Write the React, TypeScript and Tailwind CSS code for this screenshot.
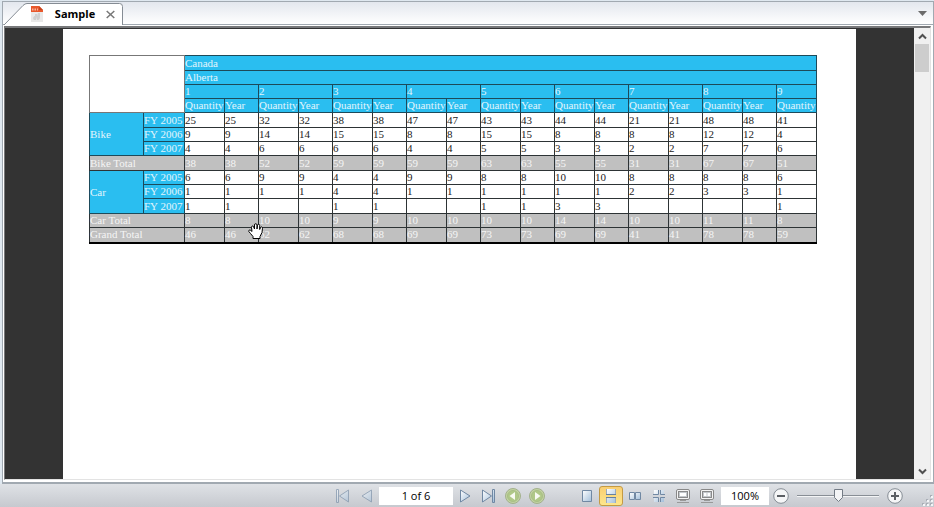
import React from "react";

type Kind = "data" | "total";
type Row = { group?: string; span?: number; label: string; kind: Kind; height: string; values: string[] };

const rows: Row[] = [
  { group: "Bike", span: 3, label: "FY 2005", kind: "data", height: "h-[15px]", values: ["25", "25", "32", "32", "38", "38", "47", "47", "43", "43", "44", "44", "21", "21", "48", "48", "41"] },
  { label: "FY 2006", kind: "data", height: "h-[14px]", values: ["9", "9", "14", "14", "15", "15", "8", "8", "15", "15", "8", "8", "8", "8", "12", "12", "4"] },
  { label: "FY 2007", kind: "data", height: "h-[14px]", values: ["4", "4", "6", "6", "6", "6", "4", "4", "5", "5", "3", "3", "2", "2", "7", "7", "6"] },
  { label: "Bike Total", kind: "total", height: "h-[15px]", values: ["38", "38", "52", "52", "59", "59", "59", "59", "63", "63", "55", "55", "31", "31", "67", "67", "51"] },
  { group: "Car", span: 3, label: "FY 2005", kind: "data", height: "h-[14px]", values: ["6", "6", "9", "9", "4", "4", "9", "9", "8", "8", "10", "10", "8", "8", "8", "8", "6"] },
  { label: "FY 2006", kind: "data", height: "h-[14px]", values: ["1", "1", "1", "1", "4", "4", "1", "1", "1", "1", "1", "1", "2", "2", "3", "3", "1"] },
  { label: "FY 2007", kind: "data", height: "h-[15px]", values: ["1", "1", "", "", "1", "1", "", "", "1", "1", "3", "3", "", "", "", "", "1"] },
  { label: "Car Total", kind: "total", height: "h-[14px]", values: ["8", "8", "10", "10", "9", "9", "10", "10", "10", "10", "14", "14", "10", "10", "11", "11", "8"] },
  { label: "Grand Total", kind: "total", height: "h-[15px]", values: ["46", "46", "62", "62", "68", "68", "69", "69", "73", "73", "69", "69", "41", "41", "78", "78", "59"] },
];

const months = ["1", "2", "3", "4", "5", "6", "7", "8", "9"];
const cell = "border border-[#2d3335] p-0 text-left align-middle font-normal whitespace-nowrap";
const head = "border border-[#1d4a5a] bg-[#2abef0] text-[#e2f5fc] p-0 text-left align-middle font-normal whitespace-nowrap";

function Report() {
  return (
    <table className="w-[728px] table-fixed border-collapse font-['Liberation_Serif',serif] text-[11px] leading-[13px] text-[#222]">
      <colgroup>
        <col className="w-[54px]" />
        <col className="w-[41px]" />
        {months.map((m) => (
          <React.Fragment key={m}>
            <col className="w-[40px]" />
            {m !== "9" && <col className="w-[34px]" />}
          </React.Fragment>
        ))}
      </colgroup>
      <thead>
        <tr className="h-[15px]">
          <td rowSpan={4} colSpan={2} className="border border-[#777] bg-white" />
          <th colSpan={17} className={head}>Canada</th>
        </tr>
        <tr className="h-[14px]">
          <th colSpan={17} className={head}>Alberta</th>
        </tr>
        <tr className="h-[14px]">
          {months.map((m) => (
            <th key={m} colSpan={m === "9" ? 1 : 2} className={head}>{m}</th>
          ))}
        </tr>
        <tr className="h-[14px]">
          {months.map((m) => (
            <React.Fragment key={m}>
              <th className={head}>Quantity</th>
              {m !== "9" && <th className={head}>Year</th>}
            </React.Fragment>
          ))}
        </tr>
      </thead>
      <tbody className="border-b-2 border-black">
        {rows.map((r, i) => (
          <tr key={i} className={r.height}>
            {r.group && <th rowSpan={r.span} className={head}>{r.group}</th>}
            {r.kind === "data" ? (
              <th className={head}>{r.label}</th>
            ) : (
              <th colSpan={2} className={`${cell} bg-[#c0c0c0] text-[#f5f5f5]`}>{r.label}</th>
            )}
            {r.values.map((v, j) => (
              <td key={j} className={r.kind === "total" ? `${cell} bg-[#c0c0c0] text-[#f5f5f5]` : cell}>{v}</td>
            ))}
          </tr>
        ))}
      </tbody>
    </table>
  );
}

function PdfIcon() {
  return (
    <svg width="14" height="17" viewBox="0 0 14 17" aria-hidden="true">
      <path d="M1 1h9l3 4v11H1z" fill="#e9e9e9" />
      <path d="M1 0h8l4 4v2H1z" fill="#e8582c" />
      <path d="M9 0l4 4H9z" fill="#c8441e" />
      <path d="M2 3.500h1.500M4.500 3.500h1.500M7 3.500h1" stroke="#f6b39c" strokeWidth="2" />
      <path d="M4 14c-2-2 0-4 1-4V8h2v2l1-3h2v4c0 2-1 3-2 3H7v-3l-1 3z" fill="#cfcfcf" />
    </svg>
  );
}

function HandCursor() {
  return (
    <svg className="absolute left-[185px] top-[194px]" width="17" height="17" viewBox="0 0 17 17" aria-hidden="true">
      <path
        d="M5 15.500v-2L2.500 10.500 0.800 8.500q-.3-1.500 1-1.500 1 0 2.200 1.500L3.500 4.500q0-1.500 1-1.500t1.200 1L6.500 6V2q0-1.300 1.200-1.300T9 2v4l.5-3.800q.2-1 1.200-.9 1 .1 1 1.200V6.500l.8-2q.4-.8 1.200-.6.9.3.8 1.300l-.5 4.300-2 4v2z"
        fill="#fff"
        stroke="#000"
      />
    </svg>
  );
}

type ToolProps = { label: string; size?: string; children: React.ReactNode };
function Tool({ label, size = "size-6", children }: ToolProps) {
  return (
    <button type="button" aria-label={label} className={`flex shrink-0 items-center justify-center ${size}`}>
      <svg width="18" height="18" viewBox="0 0 18 18" fill="url(#glass)" stroke="#7088a3">
        {children}
      </svg>
    </button>
  );
}

function Round({ label, d }: { label: string; d: string }) {
  return (
    <button type="button" aria-label={label} className="flex size-6 shrink-0 items-center justify-center">
      <svg width="18" height="18" viewBox="0 0 18 18">
        <circle cx="9" cy="9" r="7.500" fill="#c3d4a2" stroke="#a3b18c" />
        <circle cx="9" cy="9" r="5.500" fill="#b0c888" stroke="#a9be87" />
        <path d={d} fill="#f8faf2" />
      </svg>
    </button>
  );
}

function ZoomButton({ label, d }: { label: string; d: string }) {
  return (
    <button type="button" aria-label={label} className="shrink-0">
      <svg width="16" height="16" viewBox="0 0 16 16">
        <circle cx="8" cy="8" r="7.300" fill="#f5f6f7" stroke="#858c94" />
        <path d={d} stroke="#5b5f64" strokeWidth="2" />
      </svg>
    </button>
  );
}

function StatusBar() {
  return (
    <footer className="flex h-[23px] shrink-0 items-center justify-end bg-linear-to-b from-[#dfe2e6] to-[#c6c9cf]">
      <svg width="0" height="0" aria-hidden="true">
        <defs>
          <linearGradient id="glass" x1="0" y1="0" x2="1" y2="1">
            <stop offset="0" stopColor="#ffffff" />
            <stop offset="1" stopColor="#a3bfda" />
          </linearGradient>
        </defs>
      </svg>
      <div className="flex items-center">
        <div className="flex items-center opacity-60">
          <Tool label="First page"><path d="M2.500 2.500h2v13h-2zM14.500 3v12L5.500 9z" /></Tool>
          <Tool label="Previous page"><path d="M13.500 3v12L4 9z" /></Tool>
        </div>
        <input aria-label="Page" defaultValue="1 of 6" className="h-[18px] w-[74px] bg-white text-center text-[11px]" />
        <Tool label="Next page"><path d="M4.500 3v12L14 9z" /></Tool>
        <Tool label="Last page"><path d="M2.500 3v12L11.500 9zM12.500 2.500h2v13h-2z" /></Tool>
        <Round label="Back" d="M11 5v8L5.500 9z" />
        <Round label="Forward" d="M7 5v8l5.500-4z" />
      </div>
      <div className="ml-[26px] flex items-center">
        <Tool label="Single page"><path d="M4.500 3.500h9v11h-9z" /></Tool>
        <button type="button" aria-label="Continuous" aria-pressed="true" className="flex h-[20px] w-[24px] shrink-0 items-center justify-center rounded-[3px] border border-[#c49a43] bg-linear-to-b from-[#f9cf72] to-[#fde68c]">
          <svg width="14" height="16" viewBox="0 0 14 16" fill="url(#glass)">
            <path d="M2 1h10v5H2zM2 9h10v6H2z" />
            <path d="M2.500 1v5M11.500 1v5M2.500 9v6M11.500 9v6" stroke="#9aabc0" />
            <path d="M2 6.500h10M2 9.500h10" stroke="#66809f" />
          </svg>
        </button>
        <Tool label="Facing pages"><path d="M3.500 5.500h5v7h-5zM9.500 5.500h5v7h-5z" /></Tool>
        <Tool label="Facing continuous">
          <path d="M4 3h4v4H4zM10 3h4v4h-4zM4 11h4v4H4zM10 11h4v4h-4z" stroke="none" />
          <path d="M8.500 3v4.500M10.500 3v4.500M8.500 10.500V15M10.500 10.500V15M3 7.500h5.500M10.500 7.500H15M3 10.500h5.500M10.500 10.500H15" />
        </Tool>
        <Tool label="Full screen">
          <rect x="2.500" y="2.500" width="13" height="10" rx="1.500" fill="#f4f4f4" stroke="#888" />
          <rect x="4.500" y="4.500" width="9" height="6" fill="#c4c8cc" stroke="#8a8a8a" />
          <rect x="6" y="6" width="6" height="3" fill="#fff" stroke="none" />
          <path d="M6 13.500h6M3 15.500h12" stroke="#999" />
        </Tool>
        <Tool label="Full screen facing">
          <rect x="2.500" y="2.500" width="13" height="10" rx="1.500" fill="#f4f4f4" stroke="#888" />
          <rect x="4.500" y="4.500" width="9" height="6" fill="#c4c8cc" stroke="#8a8a8a" />
          <path d="M6 6h2.500v3H6zM9.500 6H12v3H9.500z" fill="#fff" stroke="none" />
          <path d="M6 13.500h6M3 15.500h12" stroke="#999" />
        </Tool>
      </div>
      <input aria-label="Zoom level" defaultValue="100%" className="ml-[2px] h-[18px] w-[48px] bg-white text-center text-[11px]" />
      <div className="ml-1 flex items-center">
        <ZoomButton label="Zoom out" d="M4 8h8" />
        <label className="mx-[7px] grid h-4 w-[84px]">
          <svg className="col-start-1 row-start-1" width="84" height="16" viewBox="0 0 84 16" aria-hidden="true">
            <path d="M1 7.500h82" stroke="#888e95" />
            <path d="M1 8.500h82" stroke="#f4f5f6" />
            <path d="M38.500 1.500h8v8l-4 4-4-4z" fill="#f3f4f6" stroke="#737b85" />
          </svg>
          <input type="range" aria-label="Zoom" className="col-start-1 row-start-1 w-full opacity-0" />
        </label>
        <ZoomButton label="Zoom in" d="M4 8h8M8 4v8" />
      </div>
      <svg className="ml-[18px] self-end" width="13" height="13" viewBox="0 0 13 13" aria-hidden="true">
        <path d="M9 1h2v2H9zM5 5h2v2H5zM9 5h2v2H9zM1 9h2v2H1zM5 9h2v2H5zM9 9h2v2H9z" fill="#a9aeb6" />
        <path d="M10 2h2v2h-2zM6 6h2v2H6zM10 6h2v2h-2zM2 10h2v2H2zM6 10h2v2H6zM10 10h2v2h-2z" fill="#f4f5f7" />
      </svg>
    </footer>
  );
}

export default function App() {
  return (
    <div className="flex h-screen flex-col overflow-hidden bg-[#dfe8f0] font-['Open_Sans','Noto_Sans',sans-serif] text-black">
      <main className="mt-px ml-[2px] flex min-h-0 flex-1 flex-col border border-b-2 border-[#a1a9b1] bg-white">
        <header className="flex h-[23px] shrink-0 items-end justify-between border-b border-[#a1a9b1] bg-linear-to-b from-[#e3e7ee] to-white">
          <div className="-mb-px grid h-[22px] w-[121px]" role="tablist">
            <svg className="col-start-1 row-start-1" width="121" height="22" viewBox="0 0 121 22" aria-hidden="true">
              <path d="M1 22L20 2.500Q22 .5 24 .5h92.500q3 0 3 3V22" fill="#fff" stroke="#858c94" />
            </svg>
            <div className="col-start-1 row-start-1 flex items-center pl-[27px]">
              <PdfIcon />
              <button type="button" role="tab" aria-selected="true" className="ml-[10px] w-[42px] text-[11px] leading-4 font-bold">Sample</button>
              <button type="button" aria-label="Close Sample" className="ml-[10px]">
                <svg width="9" height="9" viewBox="0 0 9 9"><path d="M.7 1l7.600 7M8.300 1L.7 8" stroke="#777" strokeWidth="1.500" /></svg>
              </button>
            </div>
          </div>
          <button type="button" aria-label="Open tabs" className="mr-[6px] self-center">
            <svg width="9" height="5" viewBox="0 0 9 5"><path d="M0 0h9L4.500 5z" fill="#6b6b6b" /></svg>
          </button>
        </header>
        <div className="mt-px mr-[2px] mb-[2px] ml-px flex min-h-0 flex-1 border-t-2 border-r border-b border-l border-[#77787a] border-r-[#e3e3e3] border-b-[#e3e3e3]">
          <section className="flex min-w-0 flex-1 justify-center overflow-hidden bg-[#333] pt-px">
            <article className="relative w-[793px] shrink-0 bg-white px-[26px] pt-[26px]">
              <Report />
              <HandCursor />
            </article>
          </section>
          <div className="flex w-[16px] shrink-0 flex-col items-center bg-[#f0f0f0]">
            <button type="button" aria-label="Scroll up" className="flex h-[16px] items-center">
              <svg width="9" height="7" viewBox="0 0 9 7"><path d="M1 5.500l3.500-3.500L8 5.500" fill="none" stroke="#505050" strokeWidth="2" /></svg>
            </button>
            <div className="h-[28px] w-[14px] bg-[#cdcdcd]" />
            <button type="button" aria-label="Scroll down" className="mt-auto flex h-[16px] items-center">
              <svg width="9" height="7" viewBox="0 0 9 7"><path d="M1 1.500L4.500 5 8 1.500" fill="none" stroke="#505050" strokeWidth="2" /></svg>
            </button>
          </div>
        </div>
      </main>
      <StatusBar />
    </div>
  );
}
